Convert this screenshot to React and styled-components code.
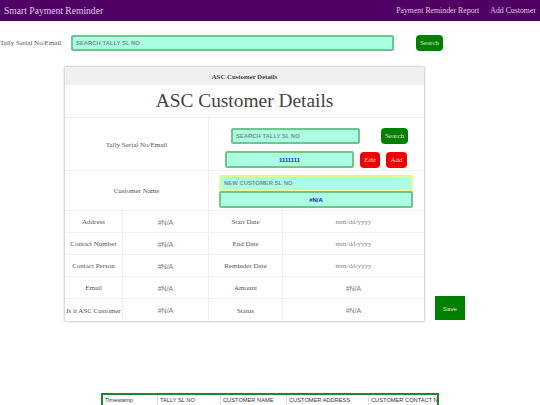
import React from "react";
import styled, { createGlobalStyle } from "styled-components";

const GlobalStyle = createGlobalStyle`
  html, body {
    margin: 0;
    padding: 0;
    height: 405px;
    overflow: hidden;
    background: #fff;
    font-family: "Liberation Serif", serif;
  }
`;

const Navbar = styled.div`
  height: 21px;
  background: #4f0062;
  color: #e0c8e4;
  display: flex;
  align-items: center;
  justify-content: space-between;
  padding: 0 4px;
`;
const Brand = styled.div`
  font-size: 9.6px;
`;
const NavLinks = styled.div`
  display: flex;
  gap: 11px;
  font-size: 7.8px;
`;

const SearchRow = styled.div`
  display: flex;
  align-items: center;
  height: 16px;
  margin-top: 14px;
`;
const SearchLabel = styled.div`
  width: 71px;
  font-size: 7px;
  color: #555;
  white-space: nowrap;
`;
const TextBox = styled.input`
  box-sizing: border-box;
  width: ${(p) => p.$w}px;
  height: ${(p) => p.$h || 16}px;
  margin: 0;
  padding: 0 3px;
  background: #aaffe2;
  border: 2px solid ${(p) => (p.$hi ? "#e6f79a" : "#70c48c")};
  border-radius: 2px;
  outline: none;
  font-family: "Liberation Sans", sans-serif;
  font-size: 5.9px;
  font-weight: bold;
  text-align: ${(p) => (p.$filled ? "center" : "left")};
  color: #1a1ad0;
  &::placeholder {
    color: #74928a;
    opacity: 1;
  }
`;
const Button = styled.button`
  box-sizing: border-box;
  width: ${(p) => p.$w}px;
  height: 16px;
  padding: 0;
  border: none;
  border-radius: 4px;
  background: ${(p) => p.$bg};
  color: #ecdede;
  font-family: "Liberation Serif", serif;
  font-size: 7px;
`;
const TopSearch = styled(Button)`
  margin-left: 22px;
`;

const Main = styled.div`
  display: flex;
  align-items: flex-end;
  margin: 16px 0 0 65px;
`;
const Card = styled.div`
  width: 359px;
  box-shadow: 0 0 2px 1px #ccc;
  border-radius: 1px;
  background: #fff;
`;
const CardHeader = styled.div`
  height: 18px;
  background: #f0f0f0;
  display: flex;
  align-items: center;
  justify-content: center;
  font-size: 6.8px;
  font-weight: bold;
  color: #444;
`;
const CardTitle = styled.div`
  height: 33px;
  display: flex;
  align-items: center;
  justify-content: center;
  font-size: 19.4px;
  color: #444;
  border-bottom: 1px solid #eee;
  box-sizing: border-box;
`;
const Grid = styled.div`
  display: grid;
  grid-template-columns: 58px 86px 74px 141px;
  grid-template-rows: 53px 40px repeat(5, 22px);
`;
const Cell = styled.div`
  display: flex;
  align-items: center;
  justify-content: center;
  box-sizing: border-box;
  padding-top: 1px;
  grid-column: span ${(p) => p.$span || 1};
  border-bottom: ${(p) => (p.$last ? "none" : "1px solid #f0f0f0")};
  border-right: ${(p) => (p.$end ? "none" : "1px solid #ecf0f2")};
  font-size: 7px;
  color: #555;
  white-space: nowrap;
`;
const Value = styled(Cell)`
  font-family: "Liberation Sans", sans-serif;
  color: #808080;
`;
const DateValue = styled(Cell)`
  color: #8a8a8a;
`;
const Stack = styled.div`
  display: flex;
  flex-direction: column;
  height: 100%;
  width: 100%;
  box-sizing: border-box;
  padding: ${(p) => p.$pad};
  gap: ${(p) => p.$gap}px;
`;
const Line = styled.div`
  display: flex;
  align-items: center;
  gap: ${(p) => p.$gap}px;
  margin-left: ${(p) => p.$left}px;
`;

const SaveButton = styled(Button)`
  width: 30px;
  height: 24px;
  margin: 0 0 1px 11px;
  border-radius: 0;
  font-family: "Liberation Sans", sans-serif;
  font-size: 6.2px;
`;

const DataTable = styled.div`
  width: 338px;
  height: 40px;
  margin: 72px 0 0 101px;
  box-sizing: border-box;
  border: 2px solid #1c8a2c;
  overflow: hidden;
  display: flex;
  align-items: flex-start;
`;
const Column = styled.div`
  flex: 0 0 ${(p) => p.$w}px;
  box-sizing: border-box;
  height: 11px;
  line-height: 11px;
  padding-left: 2px;
  border-right: 1px solid #ddd;
  border-bottom: 1px solid #ddd;
  font-family: "Liberation Sans", sans-serif;
  font-size: 5.7px;
  color: #333;
  white-space: nowrap;
`;

const rows = [
  ["Address", "Start Date", "mm/dd/yyyy"],
  ["Contact Number", "End Date", "mm/dd/yyyy"],
  ["Contact Person", "Reminder Date", "mm/dd/yyyy"],
  ["Email", "Amount", "#N/A"],
  ["Is it ASC Customer", "Status", "#N/A", true],
];

const columns = [
  ["Timestamp", 55],
  ["TALLY SL NO", 63],
  ["CUSTOMER NAME", 66],
  ["CUSTOMER ADDRESS", 82],
  ["CUSTOMER CONTACT NUMBER", 120],
];

const App = () => {
  return (
    <>
      <GlobalStyle />
      <Navbar>
        <Brand>Smart Payment Reminder</Brand>
        <NavLinks>
          <span>Payment Reminder Report</span>
          <span>Add Customer</span>
        </NavLinks>
      </Navbar>
      <SearchRow>
        <SearchLabel>Tally Serial No/Email</SearchLabel>
        <TextBox $w={323} placeholder="SEARCH TALLY SL NO" />
        <TopSearch $w={27} $bg="#008000">Search</TopSearch>
      </SearchRow>
      <Main>
        <Card>
          <CardHeader>ASC Customer Details</CardHeader>
          <CardTitle>ASC Customer Details</CardTitle>
          <Grid>
            <Cell $span={2}>Tally Serial No/Email</Cell>
            <Cell $span={2} $end>
              <Stack $pad="9px 0 0 16px" $gap={7}>
                <Line $gap={21} $left={6}>
                  <TextBox $w={129} placeholder="SEARCH TALLY SL NO" />
                  <Button $w={27} $bg="#008000">Search</Button>
                </Line>
                <Line $gap={6} $left={0}>
                  <TextBox $w={129} $h={17} $filled defaultValue="1111111" />
                  <Button $w={20} $bg="#f00000">Edit</Button>
                  <Button $w={21} $bg="#f00000">Add</Button>
                </Line>
              </Stack>
            </Cell>
            <Cell $span={2}>Customer Name</Cell>
            <Cell $span={2} $end>
              <Stack $pad="3px 0 0 10px" $gap={0}>
                <TextBox $w={194} $h={16} $hi placeholder="NEW CUSTOMER SL NO" />
                <TextBox $w={194} $h={17} $filled defaultValue="#N/A" />
              </Stack>
            </Cell>
            {rows.map(([label, other, value, last]) => (
              <React.Fragment key={label}>
                <Cell $last={last}>{label}</Cell>
                <Value $last={last}>#N/A</Value>
                <Cell $last={last}>{other}</Cell>
                {value === "#N/A" ? (
                  <Value $last={last} $end>{value}</Value>
                ) : (
                  <DateValue $last={last} $end>{value}</DateValue>
                )}
              </React.Fragment>
            ))}
          </Grid>
        </Card>
        <SaveButton $bg="#008000">Save</SaveButton>
      </Main>
      <DataTable>
        {columns.map(([name, w]) => (
          <Column key={name} $w={w}>{name}</Column>
        ))}
      </DataTable>
    </>
  );
};

export default App;
